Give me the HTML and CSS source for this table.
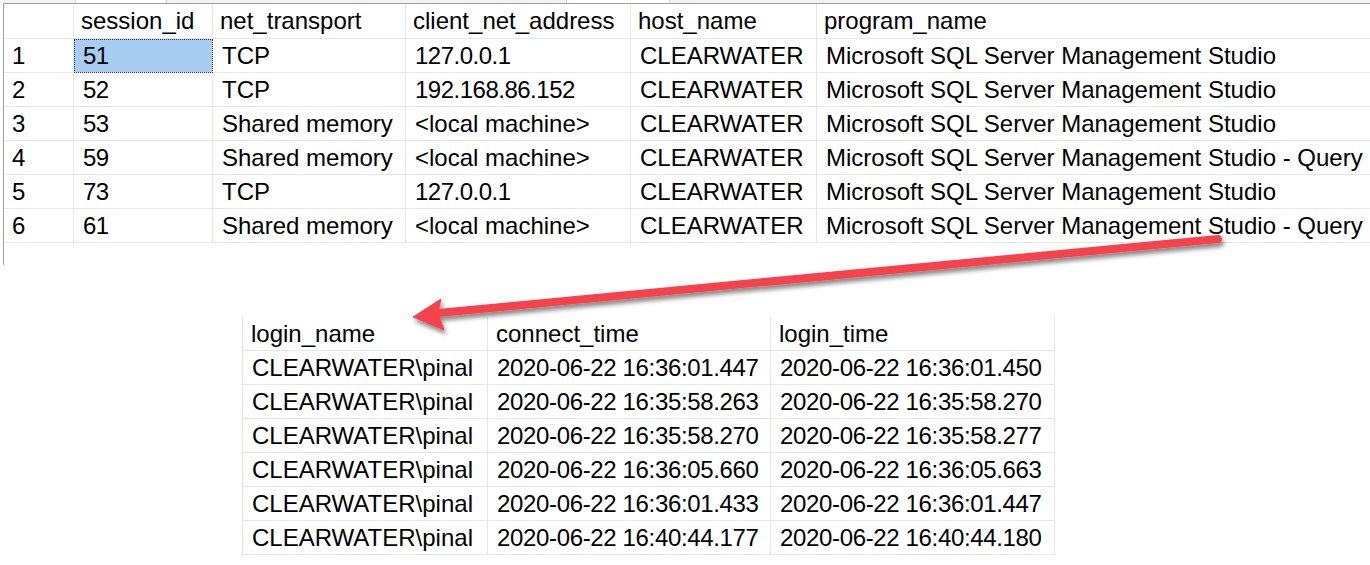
FILE: index.html
```html
<!DOCTYPE html>
<html>
<head>
<meta charset="utf-8">
<link rel="stylesheet" href="styles.css">
</head>
<body>
<div class="page">
  <div class="tabs">
    <span class="tab tab-a"></span>
    <span class="tab tab-b"></span>
  </div>
  <div class="results">
    <div class="grid grid-top">
      <div class="c h rn"></div>
      <div class="c h">session_id</div>
      <div class="c h">net_transport</div>
      <div class="c h">client_net_address</div>
      <div class="c h">host_name</div>
      <div class="c h last">program_name</div>

      <div class="c rn">1</div>
      <div class="c sel num">51</div>
      <div class="c">TCP</div>
      <div class="c num">127.0.0.1</div>
      <div class="c">CLEARWATER</div>
      <div class="c last">Microsoft SQL Server Management Studio</div>

      <div class="c rn">2</div>
      <div class="c num">52</div>
      <div class="c">TCP</div>
      <div class="c num">192.168.86.152</div>
      <div class="c">CLEARWATER</div>
      <div class="c last">Microsoft SQL Server Management Studio</div>

      <div class="c rn">3</div>
      <div class="c num">53</div>
      <div class="c">Shared memory</div>
      <div class="c">&lt;local machine&gt;</div>
      <div class="c">CLEARWATER</div>
      <div class="c last">Microsoft SQL Server Management Studio</div>

      <div class="c rn">4</div>
      <div class="c num">59</div>
      <div class="c">Shared memory</div>
      <div class="c">&lt;local machine&gt;</div>
      <div class="c">CLEARWATER</div>
      <div class="c last">Microsoft SQL Server Management Studio - Query</div>

      <div class="c rn">5</div>
      <div class="c num">73</div>
      <div class="c">TCP</div>
      <div class="c num">127.0.0.1</div>
      <div class="c">CLEARWATER</div>
      <div class="c last">Microsoft SQL Server Management Studio</div>

      <div class="c rn">6</div>
      <div class="c num">61</div>
      <div class="c">Shared memory</div>
      <div class="c">&lt;local machine&gt;</div>
      <div class="c">CLEARWATER</div>
      <div class="c last">Microsoft SQL Server Management Studio - Query</div>
    </div>
  </div>

  <div class="grid grid-bottom">
    <div class="c h">login_name</div>
    <div class="c h">connect_time</div>
    <div class="c h">login_time</div>

    <div class="c">CLEARWATER\pinal</div>
    <div class="c date">2020-06-22 16:36:01.447</div>
    <div class="c date">2020-06-22 16:36:01.450</div>

    <div class="c">CLEARWATER\pinal</div>
    <div class="c date">2020-06-22 16:35:58.263</div>
    <div class="c date">2020-06-22 16:35:58.270</div>

    <div class="c">CLEARWATER\pinal</div>
    <div class="c date">2020-06-22 16:35:58.270</div>
    <div class="c date">2020-06-22 16:35:58.277</div>

    <div class="c">CLEARWATER\pinal</div>
    <div class="c date">2020-06-22 16:36:05.660</div>
    <div class="c date">2020-06-22 16:36:05.663</div>

    <div class="c">CLEARWATER\pinal</div>
    <div class="c date">2020-06-22 16:36:01.433</div>
    <div class="c date">2020-06-22 16:36:01.447</div>

    <div class="c">CLEARWATER\pinal</div>
    <div class="c date">2020-06-22 16:40:44.177</div>
    <div class="c date">2020-06-22 16:40:44.180</div>
  </div>

  <svg class="arrow" width="1370" height="565" viewBox="0 0 1370 565">
    <defs>
      <filter id="shadow" x="-10%" y="-50%" width="120%" height="200%">
        <feDropShadow dx="2" dy="4" stdDeviation="2" flood-color="#000" flood-opacity="0.45"/>
      </filter>
    </defs>
    <g filter="url(#shadow)" fill="#f5434b" stroke="#f5434b">
      <line x1="1218" y1="239" x2="438" y2="313" stroke-width="8" stroke-linecap="round"/>
      <polygon points="413,317 441,299 438,314 444,330" stroke-width="1" stroke-linejoin="round"/>
    </g>
  </svg>
</div>
</body>
</html>
```

FILE: styles.css
```css
html, body {
  margin: 0;
  padding: 0;
  background: #ffffff;
}

.page {
  position: relative;
  width: 1370px;
  height: 565px;
  overflow: hidden;
  font-family: "Liberation Sans", Arial, sans-serif;
  font-size: 24px;
  color: #000;
}

.tabs {
  height: 3px;
  display: flex;
  background: #f3f3f3;
}

.tab {
  display: block;
  height: 3px;
  background: #ffffff;
  border-left: 1px solid #d0d0d0;
  border-right: 1px solid #d0d0d0;
  box-sizing: border-box;
}

.tab-a { margin-left: 75px; width: 92px; }
.tab-b { margin-left: 399px; width: 104px; }

.results {
  margin-left: 3px;
  border-left: 1px solid #a0a0a0;
  border-top: 1px solid #a0a0a0;
  height: 261px;
}

.grid {
  display: grid;
  grid-auto-rows: 34px;
}

.grid-top {
  grid-template-columns: 70px 139px 193px 225px 186px 1fr;
  grid-template-rows: 35px;
}

.grid-bottom {
  margin-top: 52px;
  margin-left: 242px;
  width: 813px;
  border-left: 1px solid #e2e2e2;
  grid-template-columns: 245px 283px 284px;
}

.c {
  box-sizing: border-box;
  border-right: 1px solid #e6e6e6;
  border-bottom: 1px solid #e6e6e6;
  padding-left: 9px;
  line-height: 33px;
  white-space: nowrap;
  overflow: hidden;
}

.c.h {
  padding-left: 7px;
  line-height: 34px;
}

.grid-bottom .c.h {
  padding-left: 8px;
  line-height: 33px;
}

.c.last {
  border-right: none;
}

.c.rn {
  padding-left: 8px;
}

.c.num {
  letter-spacing: -0.5px;
}

.c.date {
  letter-spacing: -0.35px;
}

.c.sel {
  background: #a7cef0;
  outline: 1px dotted #333;
  outline-offset: -1px;
}

.arrow {
  position: absolute;
  top: 0;
  left: 0;
  pointer-events: none;
}
```
